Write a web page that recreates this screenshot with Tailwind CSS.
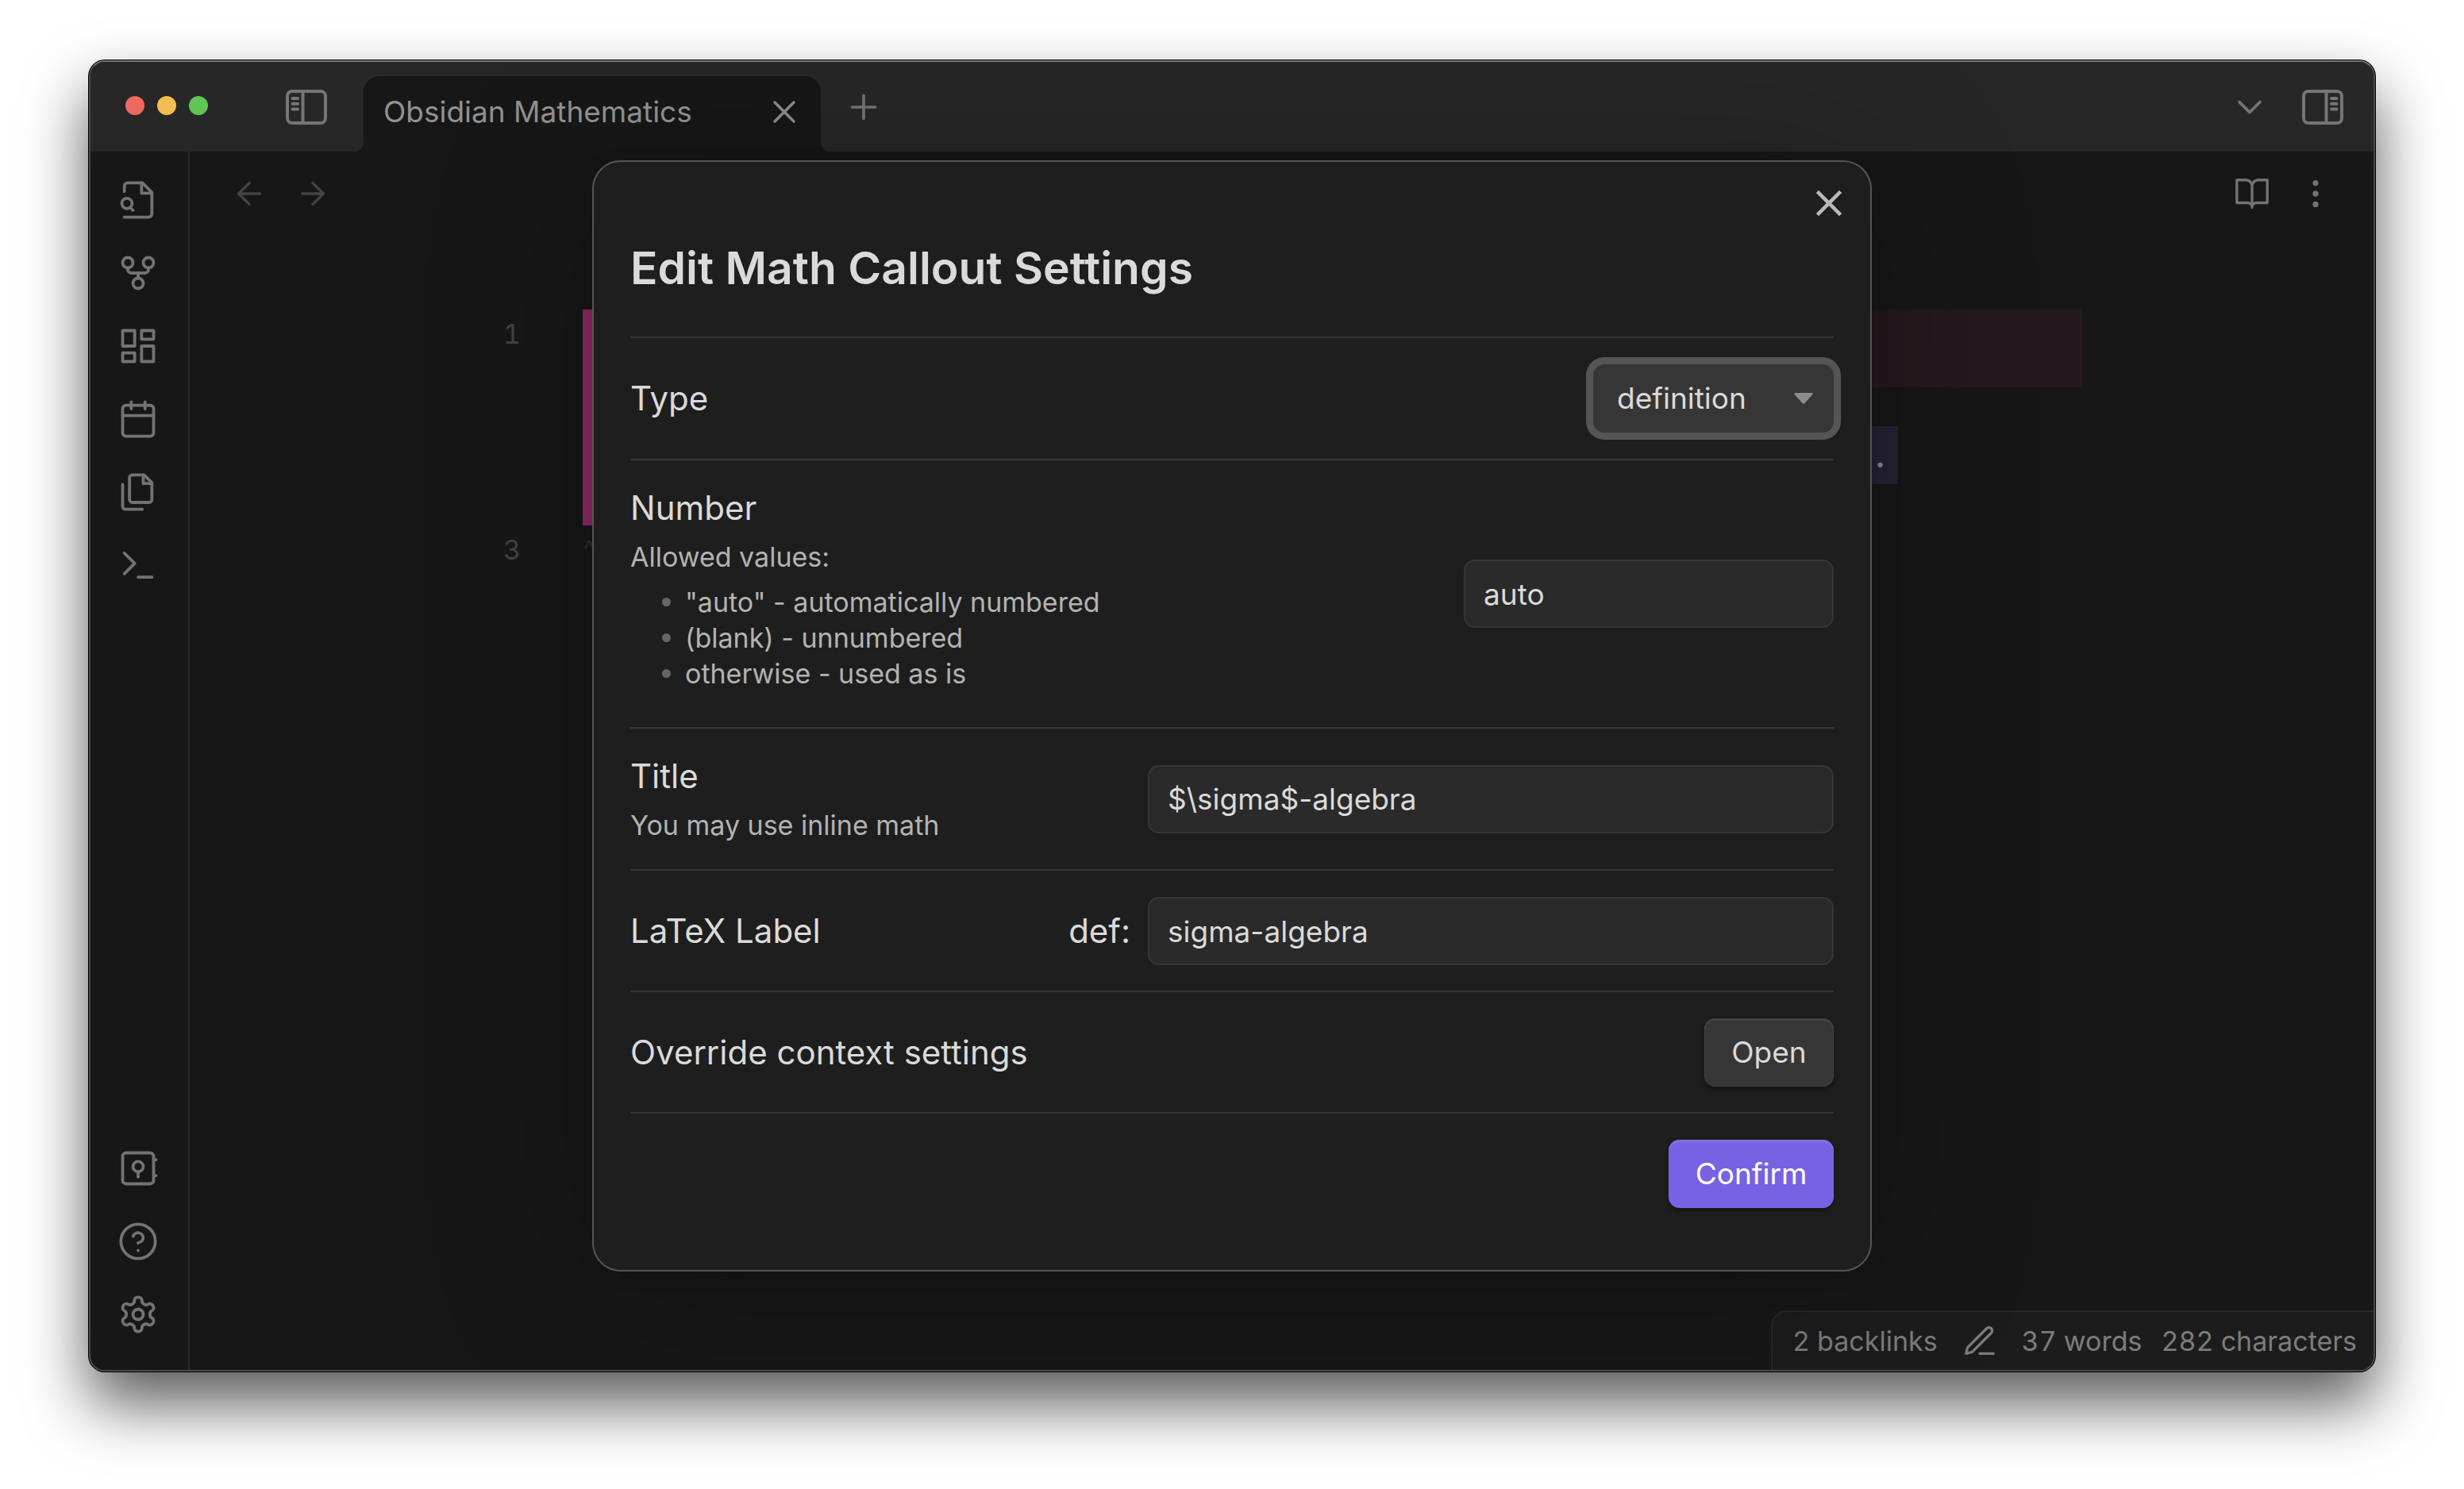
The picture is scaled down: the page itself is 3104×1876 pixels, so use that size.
<!DOCTYPE html>
<html lang="en">
<head>
<meta charset="utf-8">
<title>Obsidian Mathematics</title>
<script src="https://cdn.jsdelivr.net/npm/@tailwindcss/browser@4"></script>
</head>
<body class="bg-white font-[Inter,sans-serif] text-[#dadada]">
<svg class="hidden" aria-hidden="true">
  <symbol id="sidebar" viewBox="0 0 52 44"><rect x="2" y="2" width="48" height="40" rx="6" fill="none" stroke="currentColor" stroke-width="4"/><path d="M21.500 2v40" fill="none" stroke="currentColor" stroke-width="4"/><path d="M8.500 11h6.500M8.500 17.700h6.500M8.500 24.400h6.500" fill="none" stroke="currentColor" stroke-width="4" stroke-linecap="round"/></symbol>
</svg>
<div class="flex min-h-screen flex-col px-28 pt-[76px] pb-[148px]">
  <div class="relative flex flex-1 flex-col overflow-hidden rounded-[20px] border-2 border-[#4a4a4a] border-t-[#757575] bg-[#171717] shadow-[0_0_0_1px_#000,0_40px_80px_rgba(0,0,0,0.66)]">

    <header class="flex h-[113px] items-center bg-[#272727] pr-[38px] pl-11 text-[#757575]">
      <div class="flex gap-4 pb-1">
        <span class="size-6 rounded-full bg-[#ed6a5e]"></span>
        <span class="size-6 rounded-full bg-[#f5bd4f]"></span>
        <span class="size-6 rounded-full bg-[#61c454]"></span>
      </div>
      <button class="ml-[98px]" aria-label="Toggle left sidebar"><svg class="h-11 w-[52px]"><use href="#sidebar"/></svg></button>
      <div class="relative ml-[46px] flex h-[95px] w-[576px] items-center justify-between self-end rounded-t-[20px] bg-[#171717] pr-[22px] pb-1.5 pl-[25px]">
        <svg class="absolute bottom-0 -left-3 size-3" viewBox="0 0 12 12"><path d="M12 0v12H0A12 12 0 0 0 12 0z" fill="#171717"/></svg>
        <svg class="absolute -right-3 bottom-0 size-3" viewBox="0 0 12 12"><path d="M0 0v12h12A12 12 0 0 1 0 0z" fill="#171717"/></svg>
        <span class="text-[37px] text-[#929292]">Obsidian Mathematics</span>
        <button aria-label="Close tab" class="text-[#8f8f8f]"><svg class="size-12" viewBox="0 0 24 24" fill="none" stroke="currentColor" stroke-width="1.75" stroke-linecap="round"><path d="M18 6 6 18M6 6l12 12"/></svg></button>
      </div>
      <button class="ml-[29px]" aria-label="New tab"><svg class="size-[50px]" viewBox="0 0 24 24" fill="none" stroke="currentColor" stroke-width="1.75" stroke-linecap="round"><path d="M5 12h14M12 5v14"/></svg></button>
      <button class="ml-auto" aria-label="Tab list"><svg class="size-[52px]" viewBox="0 0 24 24" fill="none" stroke="currentColor" stroke-width="1.75" stroke-linecap="round" stroke-linejoin="round"><path d="m6 9 6 6 6-6"/></svg></button>
      <button class="ml-10" aria-label="Toggle right sidebar"><svg class="h-11 w-[52px] -scale-x-100"><use href="#sidebar"/></svg></button>
    </header>

    <div class="flex flex-1">
      <nav class="flex w-[125px] flex-col items-center gap-10 border-r-2 border-[#272727] pt-[35px] pr-[3px] pb-11 text-[#737373]">
        <button aria-label="Quick switcher"><svg class="size-[52px]" viewBox="0 0 24 24" fill="none" stroke="currentColor" stroke-width="1.75" stroke-linecap="round" stroke-linejoin="round"><path d="M4 22h14a2 2 0 0 0 2-2V7.500L14.500 2H6a2 2 0 0 0-2 2v3"/><path d="M14 2v6h6M9 18l-1.500-1.500"/><circle cx="5.500" cy="14" r="3"/></svg></button>
        <button aria-label="Graph view"><svg class="size-[52px]" viewBox="0 0 24 24" fill="none" stroke="currentColor" stroke-width="1.75" stroke-linecap="round" stroke-linejoin="round"><circle cx="12" cy="18" r="3"/><circle cx="6" cy="6" r="3"/><circle cx="18" cy="6" r="3"/><path d="M18 9v1a2 2 0 0 1-2 2H8a2 2 0 0 1-2-2V9M12 12v3"/></svg></button>
        <button aria-label="New canvas"><svg class="size-[52px]" viewBox="0 0 24 24" fill="none" stroke="currentColor" stroke-width="1.75" stroke-linejoin="round"><path d="M3 3h7v9H3zM14 3h7v5h-7zM14 12h7v9h-7zM3 16h7v5H3z"/></svg></button>
        <button aria-label="Daily note"><svg class="size-[52px]" viewBox="0 0 24 24" fill="none" stroke="currentColor" stroke-width="1.75" stroke-linecap="round" stroke-linejoin="round"><rect x="3" y="4" width="18" height="18" rx="2"/><path d="M16 2v4M8 2v4M3 10h18"/></svg></button>
        <button aria-label="Insert template"><svg class="size-[52px]" viewBox="0 0 24 24" fill="none" stroke="currentColor" stroke-width="1.75" stroke-linecap="round" stroke-linejoin="round"><path d="M15.500 2H8.600c-.4 0-.8.2-1.100.5-.3.3-.5.7-.5 1.100v12.800c0 .4.2.8.5 1.100.3.3.7.5 1.100.5h9.800c.4 0 .8-.2 1.100-.5.3-.3.5-.7.5-1.100V6.500L15.500 2z"/><path d="M3 7.600v12.800c0 .4.2.8.5 1.100.3.3.7.5 1.100.5h9.800M15 2v5h5"/></svg></button>
        <button aria-label="Command palette"><svg class="size-[52px]" viewBox="0 0 24 24" fill="none" stroke="currentColor" stroke-width="1.75" stroke-linecap="round" stroke-linejoin="round"><path d="m4 17 6-6-6-6M12 19h8"/></svg></button>
        <button class="mt-auto" aria-label="Open another vault"><svg class="size-[52px]" viewBox="0 0 24 24" fill="none" stroke="currentColor" stroke-width="1.75" stroke-linecap="round" stroke-linejoin="round"><rect x="3" y="3" width="18" height="18" rx="2"/><circle cx="12" cy="11" r="3"/><path d="M12 14v3M21.500 7h.9M21.500 16.200h.9"/></svg></button>
        <button aria-label="Help"><svg class="size-[52px]" viewBox="0 0 24 24" fill="none" stroke="currentColor" stroke-width="1.75" stroke-linecap="round" stroke-linejoin="round"><circle cx="12" cy="12" r="10"/><path d="M9.090 9a3 3 0 0 1 5.830 1c0 2-3 3-3 3M12 17.300h.01"/></svg></button>
        <button aria-label="Settings"><svg class="size-[52px]" viewBox="0 0 24 24" fill="none" stroke="currentColor" stroke-width="1.75" stroke-linecap="round" stroke-linejoin="round"><path d="M12.220 2h-.44a2 2 0 0 0-2 2v.18a2 2 0 0 1-1 1.730l-.43.25a2 2 0 0 1-2 0l-.15-.08a2 2 0 0 0-2.730.73l-.22.38a2 2 0 0 0 .73 2.730l.15.1a2 2 0 0 1 1 1.720v.51a2 2 0 0 1-1 1.740l-.15.09a2 2 0 0 0-.73 2.730l.22.38a2 2 0 0 0 2.730.73l.15-.08a2 2 0 0 1 2 0l.43.25a2 2 0 0 1 1 1.730V20a2 2 0 0 0 2 2h.44a2 2 0 0 0 2-2v-.18a2 2 0 0 1 1-1.730l.43-.25a2 2 0 0 1 2 0l.15.08a2 2 0 0 0 2.730-.73l.22-.39a2 2 0 0 0-.73-2.730l-.15-.08a2 2 0 0 1-1-1.740v-.5a2 2 0 0 1 1-1.740l.15-.09a2 2 0 0 0 .73-2.730l-.22-.38a2 2 0 0 0-2.730-.73l-.15.08a2 2 0 0 1-2 0l-.43-.25a2 2 0 0 1-1-1.730V4a2 2 0 0 0-2-2z"/><circle cx="12" cy="12" r="3"/></svg></button>
      </nav>

      <main class="flex flex-1 flex-col">
        <div class="flex h-[106px] items-center pr-[50px] pl-[52px] text-[#737373]">
          <button aria-label="Back" class="text-[#444]"><svg class="size-[46px]" viewBox="0 0 24 24" fill="none" stroke="currentColor" stroke-width="1.75" stroke-linecap="round" stroke-linejoin="round"><path d="M19 12H5l7 7M5 12l7-7"/></svg></button>
          <button aria-label="Forward" class="ml-[34px] text-[#444]"><svg class="size-[46px]" viewBox="0 0 24 24" fill="none" stroke="currentColor" stroke-width="1.75" stroke-linecap="round" stroke-linejoin="round"><path d="M5 12h14l-7-7M19 12l-7 7"/></svg></button>
          <button aria-label="Reading view" class="ml-auto"><svg class="size-[46px]" viewBox="0 0 24 24" fill="none" stroke="currentColor" stroke-width="1.75" stroke-linecap="round" stroke-linejoin="round"><path d="M2 3h6a4 4 0 0 1 4 4v14a3 3 0 0 0-3-3H2zM22 3h-6a4 4 0 0 0-4 4v14a3 3 0 0 1 3-3h7z"/></svg></button>
          <button aria-label="More options" class="ml-[34px]"><svg class="size-[46px]" viewBox="0 0 24 24" fill="currentColor"><circle cx="12" cy="5" r="1.900"/><circle cx="12" cy="12" r="1.900"/><circle cx="12" cy="19" r="1.900"/></svg></button>
        </div>
        <div class="mt-[93px] mr-[367px] grid grid-cols-[417px_1fr] gap-x-[78px] text-[34px] leading-[62px] text-[#444] tabular-nums">
          <div class="text-right">1</div>
          <div class="h-[98px] border-l-[20px] border-[#8f2865] bg-[#25181e]"></div>
          <div></div>
          <div class="h-[174px] border-l-[20px] border-[#8f2865] pt-[49px] pr-[232px]">
            <div class="h-[73px] bg-[#262235] pr-4 text-right text-[48px] leading-[70px] text-[#8a8a8a]">.</div>
          </div>
          <div class="text-right">3</div>
          <div class="text-[#2e2e2e]">^</div>
        </div>
      </main>
    </div>

    <footer class="absolute right-0 bottom-0 flex h-[75px] items-center rounded-tl-[20px] border-t-2 border-l-2 border-[#282828] bg-[#1c1c1c] pr-[21px] pl-[25px] text-[34px] text-[#7c7c7c] tabular-nums">
      <span>2 backlinks</span>
      <svg class="mx-[30px] size-[46px]" viewBox="0 0 24 24" fill="none" stroke="currentColor" stroke-width="1.75" stroke-linecap="round" stroke-linejoin="round"><path d="M12 20h9M16.500 3.500a2.121 2.121 0 0 1 3 3L7 19l-4 1 1-4L16.500 3.500z"/></svg>
      <span>37 words</span>
      <span class="ml-6">282 characters</span>
    </footer>

    <div class="absolute inset-0 flex items-center justify-center">
      <section role="dialog" aria-labelledby="dialog-title" class="relative w-[1612px] max-w-full rounded-[36px] border-2 border-[#555] bg-[#1e1e1e] px-[46px] pt-24 pb-[46px] shadow-[0_4px_24px_rgba(0,0,0,0.1),0_20px_200px_rgba(0,0,0,0.25)]">
        <button aria-label="Close" class="absolute top-7 right-7 text-[#b8b8b8]"><svg class="size-12" viewBox="0 0 24 24" fill="none" stroke="currentColor" stroke-width="2.300"><path d="M19.300 4.700 4.700 19.300M4.700 4.700l14.600 14.600"/></svg></button>
        <h1 id="dialog-title" class="mb-12 text-[57px] leading-[76px] font-semibold">Edit Math Callout Settings</h1>

        <div class="flex items-center justify-between border-t-2 border-[#363636] py-[33px]">
          <label for="type" class="text-[42px] leading-[54px]">Type</label>
          <div class="relative">
            <select id="type" class="h-[86px] w-[303px] appearance-none rounded-[14px] bg-[#363636] pl-[30px] text-[37px] ring-[9px] ring-[#555]"><option>definition</option></select>
            <svg class="pointer-events-none absolute top-9 right-[26px] h-[14px] w-6" viewBox="0 0 24 14"><path d="M1.500 0h21q2 0.500 .8 2L13.500 13q-1.500 1.500-3 0L.7 2Q-.5.5 1.500 0z" fill="#8c8c8c"/></svg>
          </div>
        </div>

        <div class="flex items-center justify-between border-t-2 border-[#363636] py-[33px]">
          <div>
            <label for="number" class="block text-[42px] leading-[54px]">Number</label>
            <div class="mt-3 text-[34px] leading-[45px] text-[#b3b3b3]">
              <p>Allowed values:</p>
              <ul class="my-3 flex flex-col">
                <li class="flex items-center gap-[18px] pl-10"><span class="size-[11px] rounded-full bg-[#666]"></span>"auto" - automatically numbered</li>
                <li class="flex items-center gap-[18px] pl-10"><span class="size-[11px] rounded-full bg-[#666]"></span>(blank) - unnumbered</li>
                <li class="flex items-center gap-[18px] pl-10"><span class="size-[11px] rounded-full bg-[#666]"></span>otherwise - used as is</li>
              </ul>
            </div>
          </div>
          <input id="number" type="text" value="auto" class="h-[86px] w-[466px] rounded-[14px] border-2 border-[#363636] bg-[#2a2a2a] px-[23px] text-[37px]">
        </div>

        <div class="flex items-center justify-between border-t-2 border-[#363636] py-[33px]">
          <div>
            <label for="title" class="block text-[42px] leading-[54px]">Title</label>
            <p class="mt-3 text-[34px] leading-[45px] text-[#b3b3b3]">You may use inline math</p>
          </div>
          <input id="title" type="text" value="$\sigma$-algebra" class="h-[86px] w-[864px] rounded-[14px] border-2 border-[#363636] bg-[#2a2a2a] px-[23px] text-[37px]">
        </div>

        <div class="flex items-center border-t-2 border-[#363636] pt-[33px] pb-8 text-[42px] leading-[54px]">
          <label for="latex">LaTeX Label</label>
          <span class="mr-[22px] ml-auto">def:</span>
          <input id="latex" type="text" value="sigma-algebra" class="h-[86px] w-[864px] rounded-[14px] border-2 border-[#363636] bg-[#2a2a2a] px-[23px] text-[37px]">
        </div>

        <div class="flex items-center justify-between border-t-2 border-[#363636] pt-[33px] pb-8">
          <span class="text-[42px] leading-[54px]">Override context settings</span>
          <button class="h-[86px] w-[163px] rounded-[14px] bg-[#363636] text-[37px] shadow-[inset_0_0_0_1px_#404040,inset_0_3px_2px_#444,0_4px_6px_rgba(0,0,0,0.3)]">Open</button>
        </div>

        <div class="flex justify-end border-t-2 border-[#363636] pt-[33px] pb-8">
          <button class="h-[86px] w-[208px] rounded-[14px] bg-[#7862e4] text-[37px] text-white shadow-[inset_0_3px_2px_#8672e8,0_4px_6px_rgba(0,0,0,0.3)]">Confirm</button>
        </div>
      </section>
    </div>
  </div>
</div>
</body>
</html>
